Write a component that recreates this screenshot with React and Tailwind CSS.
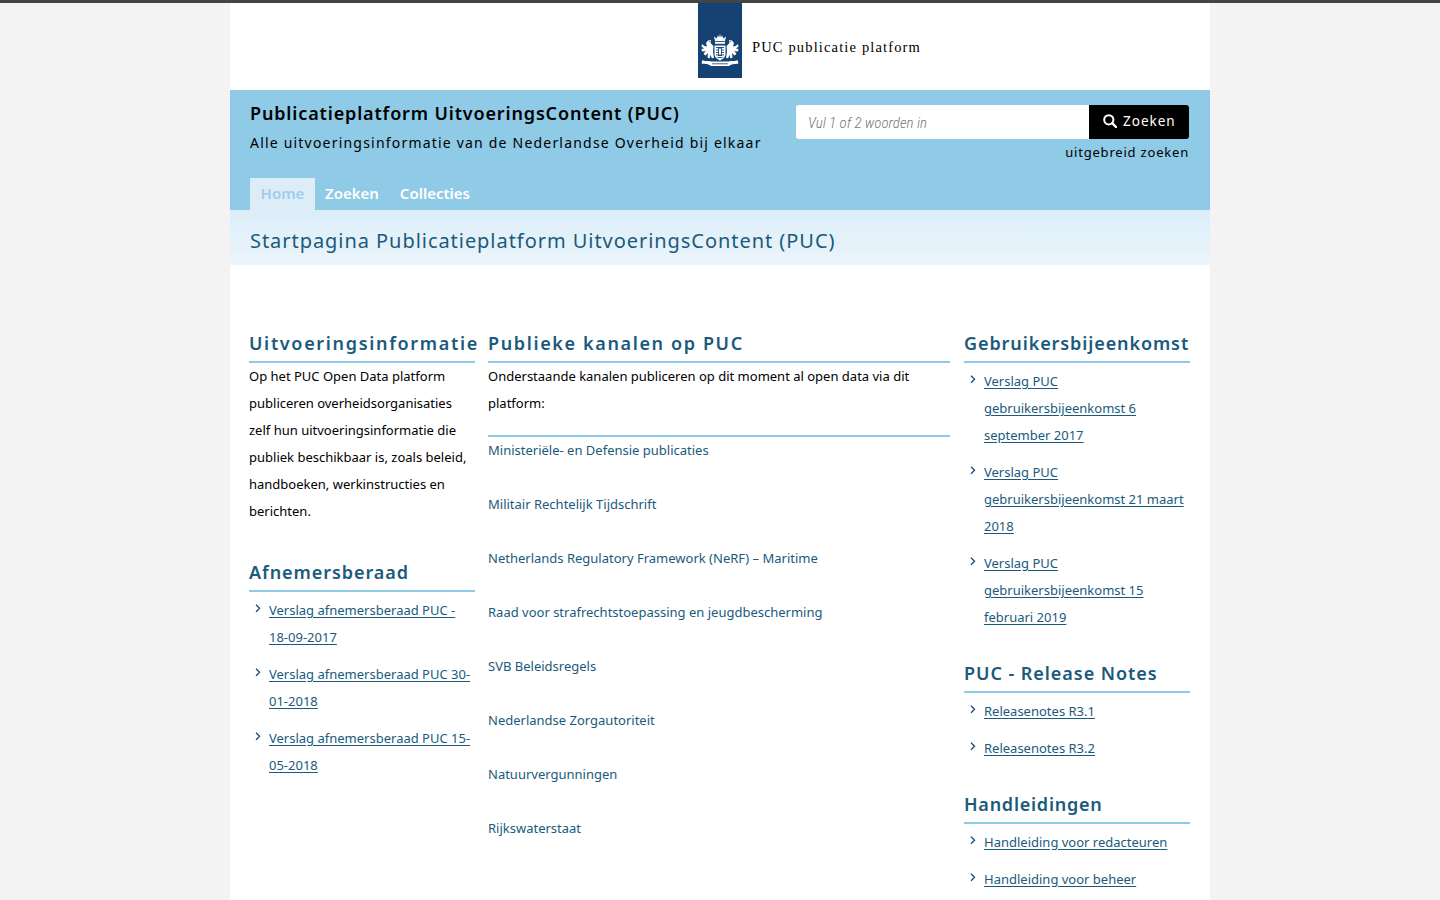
function Crest() {
  return (
    <svg width="38" height="34" viewBox="0 0 38 34" fill="#fff">
      <path d="M14 8 L13 3.5 L15.5 5.5 L17 2.5 L18.2 4.5 L19 0.5 L19.8 4.5 L21 2.5 L22.5 5.5 L25 3.5 L24 8 Z" />
      <rect x="14" y="8.8" width="10" height="2" />
      <path d="M13.5 12.5 H24.5 V21 C24.5 24.5 21.5 26 19 27.5 C16.5 26 13.5 24.5 13.5 21 Z" />
      <path d="M15 14.5 H23 M15 17 H23 M15 19.5 H23 M15 22 H23 M16.5 24.5 H21.5" stroke="#154273" strokeWidth="0.9" fill="none" />
      <path d="M17.2 14 H20.8 V23 H17.2 Z" fill="#154273" />
      <path d="M18 15.5 H20 V21.5 H18 Z" />
      <path d="M12.5 13 L9.5 10 L10 7 L7 7.5 L5 10 L6 13.5 L3.5 13 L1 11 L0.5 13.5 L3 15.5 L0.5 16 L1 18.5 L4.5 18 L2.5 21 L4.5 22.5 L7 20 L6.5 24.5 L8.5 25.5 L9.5 22 L11 25.5 L13 24.5 L12 19 Z" />
      <path d="M25.5 13 L28.5 10 L28 7 L31 7.5 L33 10 L32 13.5 L34.5 13 L37 11 L37.5 13.5 L35 15.5 L37.5 16 L37 18.5 L33.5 18 L35.5 21 L33.5 22.5 L31 20 L31.5 24.5 L29.5 25.5 L28.5 22 L27 25.5 L25 24.5 L26 19 Z" />
      <path d="M8 7.8 L9 9 M30 7.8 L29 9" stroke="#154273" strokeWidth="0.7" fill="none" />
      <path d="M1.5 27 C4 29 8 27 10 28.5 L28 28.5 C30 27 34 29 36.5 27 L37.5 30.5 C33.5 31.5 31 30.5 28 33 L10 33 C7 30.5 4.5 31.5 0.5 30.5 Z" />
      <path d="M11 30.8 H27" stroke="#154273" strokeWidth="0.8" fill="none" />
    </svg>
  );
}

function Chevron() {
  return (
    <svg className="absolute left-[-14px] top-[7px]" width="6" height="9" viewBox="0 0 6 9" fill="none">
      <path d="M1 0.8 L4.6 4.3 L1 7.8" stroke="#154273" strokeWidth="1.2" />
    </svg>
  );
}

function Heading({ children, track }) {
  return (
    <h2 className={"h-[34px] whitespace-nowrap border-b-2 border-[#8fcae7] text-[18px] font-semibold leading-[28px] text-[#1a5a7c] " + track}>
      {children}
    </h2>
  );
}

function LinkList({ items }) {
  return (
    <ul className="mb-[28px] pl-[20px] pt-[5px]">
      {items.map((t) => (
        <li key={t} className="relative mb-[10px]">
          <Chevron />
          <a href="#" className="text-[#1a5a7c] underline underline-offset-[2px]">{t}</a>
        </li>
      ))}
    </ul>
  );
}

const channels = [
  "Ministeriële- en Defensie publicaties",
  "Militair Rechtelijk Tijdschrift",
  "Netherlands Regulatory Framework (NeRF) – Maritime",
  "Raad voor strafrechtstoepassing en jeugdbescherming",
  "SVB Beleidsregels",
  "Nederlandse Zorgautoriteit",
  "Natuurvergunningen",
  "Rijkswaterstaat",
];

export default function App() {
  return (
    <div className="h-[900px] overflow-hidden border-t-[3px] border-[#444444] bg-[#f3f3f3] font-['Noto_Sans',sans-serif]">
      <div className="mx-auto h-[897px] w-[980px] overflow-hidden bg-white">
        <div className="flex h-[87px] items-start pl-[468px]">
          <div className="flex h-[75px] w-[44px] items-end justify-center bg-[#154273] pb-[11px]">
            <Crest />
          </div>
          <div className="ml-[10px] mt-[34px] font-['Liberation_Serif',serif] text-[14.5px] leading-[20px] tracking-[1.15px] text-black">
            PUC publicatie platform
          </div>
        </div>

        <div className="h-[120px] bg-[#8fcae7] pl-[20px]">
          <div className="flex h-[88px] justify-between pr-[21px]">
            <div className="pt-[9px] text-black">
              <div className="text-[18px] font-semibold leading-[28px] tracking-[0.85px]">Publicatieplatform UitvoeringsContent (PUC)</div>
              <div className="mt-[4px] whitespace-nowrap text-[14px] leading-[24px] tracking-[1.2px]">Alle uitvoeringsinformatie van de Nederlandse Overheid bij elkaar</div>
            </div>
            <div className="w-[393px] pt-[15px]">
              <div className="flex h-[34px]">
                <input
                  readOnly
                  placeholder="Vul 1 of 2 woorden in"
                  className="h-[34px] w-[293px] rounded-l-[3px] bg-white pl-[12px] pt-[2px] font-[Roboto,sans-serif] text-[15px] font-light italic font-stretch-condensed outline-none placeholder:text-[#777777]"
                />
                <button className="flex h-[34px] w-[100px] items-center rounded-r-[3px] bg-black pb-[2px] pl-[14px] text-[13.5px] tracking-[1px] text-white">
                  <svg width="14" height="14" viewBox="0 0 14 14" fill="none" className="mr-[6px]">
                    <circle cx="5.8" cy="5.8" r="4.6" stroke="#fff" strokeWidth="2" />
                    <path d="M9.2 9.2 L13 13" stroke="#fff" strokeWidth="2.4" strokeLinecap="round" />
                  </svg>
                  Zoeken
                </button>
              </div>
              <div className="mt-[3px] text-right text-[13px] leading-[20px] tracking-[0.8px] text-black">uitgebreid zoeken</div>
            </div>
          </div>
          <nav className="flex h-[32px] text-[15px] font-semibold leading-[31px] text-white">
            <a className="w-[65px] bg-[#dcedf8] text-center text-[#9ecde9]">Home</a>
            <a className="ml-[10px]">Zoeken</a>
            <a className="ml-[21px]">Collecties</a>
          </nav>
        </div>

        <div className="h-[55px] bg-gradient-to-b from-[#dcedf8] to-[#ebf5fb] pl-[20px] pt-[14px] text-[20px] leading-[34px] tracking-[0.95px] text-[#1a5a7c]">
          Startpagina Publicatieplatform UitvoeringsContent (PUC)
        </div>

        <div className="flex pl-[19px] pt-[64px] text-[13px] leading-[27px] text-black">
          <div className="w-[226px]">
            <Heading track="tracking-[1.67px]">Uitvoeringsinformatie</Heading>
            <p className="mb-[33px]">Op het PUC Open Data platform publiceren overheidsorganisaties zelf hun uitvoeringsinformatie die publiek beschikbaar is, zoals beleid, handboeken, werkinstructies en berichten.</p>
            <Heading track="tracking-[0.93px]">Afnemersberaad</Heading>
            <LinkList items={["Verslag afnemersberaad PUC - 18-09-2017", "Verslag afnemersberaad PUC 30-01-2018", "Verslag afnemersberaad PUC 15-05-2018"]} />
          </div>
          <div className="ml-[13px] w-[462px]">
            <Heading track="tracking-[1.63px]">Publieke kanalen op PUC</Heading>
            <p className="mb-[18px]">Onderstaande kanalen publiceren op dit moment al open data via dit platform:</p>
            <div className="border-t-2 border-[#8fcae7]">
              {channels.map((c) => (
                <a key={c} href="#" className="mb-[27px] block text-[#1a5a7c]">{c}</a>
              ))}
            </div>
          </div>
          <div className="ml-[14px] w-[226px]">
            <Heading track="tracking-[0.9px]">Gebruikersbijeenkomst</Heading>
            <LinkList items={["Verslag PUC gebruikersbijeenkomst 6 september 2017", "Verslag PUC gebruikersbijeenkomst 21 maart 2018", "Verslag PUC gebruikersbijeenkomst 15 februari 2019"]} />
            <Heading track="tracking-[0.95px]">PUC - Release Notes</Heading>
            <LinkList items={["Releasenotes R3.1", "Releasenotes R3.2"]} />
            <Heading track="tracking-[0.75px]">Handleidingen</Heading>
            <LinkList items={["Handleiding voor redacteuren", "Handleiding voor beheer"]} />
          </div>
        </div>
      </div>
    </div>
  );
}
